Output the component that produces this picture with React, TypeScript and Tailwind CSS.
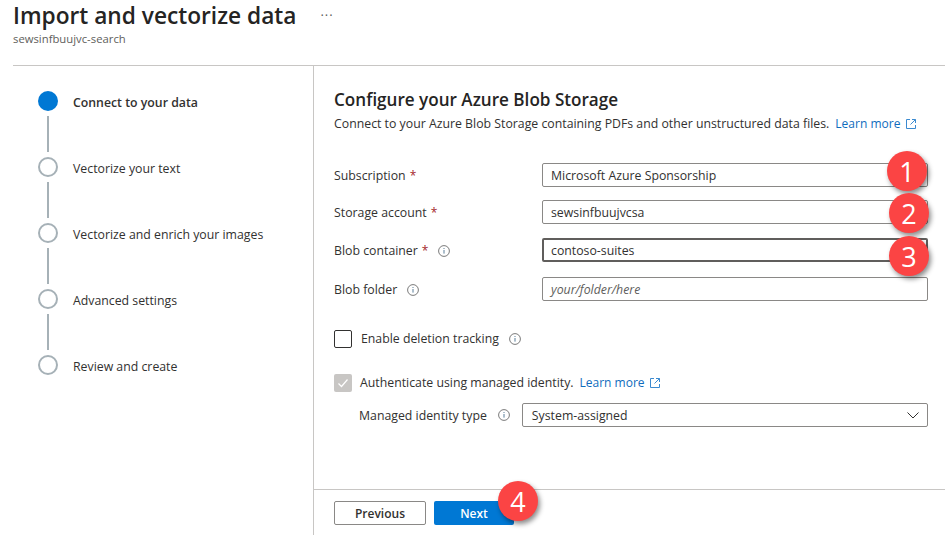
import React from "react";

const font = { fontFamily: '"Open Sans","Noto Sans",sans-serif' };

function Info({ className = "" }: { className?: string }) {
  return (
    <svg width="12" height="12" viewBox="0 0 12 12" fill="none" className={className}>
      <circle cx="6" cy="6" r="5.4" stroke="#6b6b6b" strokeWidth="0.9" />
      <rect x="5.5" y="5" width="1" height="3.6" fill="#5a7f99" />
      <rect x="5.5" y="3" width="1" height="1" fill="#5a7f99" />
    </svg>
  );
}

function Ext() {
  return (
    <svg width="10" height="10" viewBox="0 0 10 10" fill="none" stroke="#3b8ad0" strokeWidth="1">
      <path d="M4 .5H.5v9h9V6" />
      <path d="M6 .5h3.5V4M9.5.5 4.5 5.5" />
    </svg>
  );
}

function Badge({ n, className }: { n: number; className: string }) {
  return (
    <div
      className={`absolute w-10 h-10 rounded-full bg-[#fb4444] text-white flex items-center justify-center text-[27px] leading-none shadow-[2px_3px_5px_rgba(0,0,0,0.45)] ${className}`}
    >
      {n}
    </div>
  );
}

function Step({ label, active, last }: { label: string; active?: boolean; last?: boolean }) {
  return (
    <div className="flex">
      <div className="flex flex-col items-center w-5">
        {active ? (
          <div className="w-5 h-5 rounded-full bg-[#0078d4]" />
        ) : (
          <div className="w-5 h-5 rounded-full border-2 border-[#a6b1b7]" />
        )}
        {!last && <div className="w-0.5 h-9 my-[5px] bg-[#a6b1b7]" />}
      </div>
      <div className={`ml-[15px] pt-[2px] text-[12.3px] leading-5 text-[#323130] ${active ? "font-semibold" : ""}`}>
        {label}
      </div>
    </div>
  );
}

function Field({
  label,
  star,
  info,
  value,
  className = "",
  boxClass = "border border-[#8a8886] px-2",
  placeholder,
}: {
  label: string;
  star?: boolean;
  info?: boolean;
  value: string;
  className?: string;
  boxClass?: string;
  placeholder?: boolean;
}) {
  return (
    <div className={`flex items-center h-6 ${className}`}>
      <div className="w-[208px] pt-[2px] flex items-center text-[12.3px] text-[#323130]">
        <span>{label}</span>
        {star && <span className="ml-1 text-[12px] text-[#a4262c]">*</span>}
        {info && <Info className="ml-[10px]" />}
      </div>
      <div
        className={`w-[386px] h-6 pt-[2px] rounded-[2px] flex items-center text-[12.3px] ${boxClass} ${
          placeholder ? "italic text-[#605e5c]" : "text-[#323130]"
        }`}
      >
        {value}
      </div>
    </div>
  );
}

export default function App() {
  return (
    <div className="relative w-[945px] h-[540px] bg-white overflow-hidden" style={font}>
      <header className="pl-[13px] h-[65px]">
        <div className="flex items-start pt-[1px]">
          <h1 className="text-[22.7px] leading-[30px] font-semibold text-[#252423]">Import and vectorize data</h1>
          <span className="ml-[24px] mt-[6px] text-[13px] leading-4 tracking-[1px] text-[#605e5c]">···</span>
        </div>
        <div className="text-[11.3px] leading-4 text-[#605e5c]">sewsinfbuujvc-search</div>
      </header>

      <div className="ml-[13px] border-t border-[#c8c6c4] flex h-[470px]">
        <aside className="w-[301px] border-r border-[#c8c6c4] pl-[25px] pt-[25px] flex flex-col shrink-0">
          <Step label="Connect to your data" active />
          <Step label="Vectorize your text" />
          <Step label="Vectorize and enrich your images" />
          <Step label="Advanced settings" />
          <Step label="Review and create" last />
        </aside>

        <main className="flex-1 flex flex-col">
          <div className="flex-1 pl-[20px] pt-[22px]">
            <h2 className="text-[17.1px] leading-6 font-semibold text-[#252423]">Configure your Azure Blob Storage</h2>
            <p className="text-[12.3px] leading-4 text-[#323130] mt-[4px] flex items-center">
              Connect to your Azure Blob Storage containing PDFs and other unstructured data files.
              <span className="ml-[6px] text-[12px] text-[#0f6cbd]">Learn more</span>
              <span className="ml-[6px]"><Ext /></span>
            </p>
            <Field label="Subscription" star value="Microsoft Azure Sponsorship" className="mt-[31px]" />
            <Field label="Storage account" star value="sewsinfbuujvcsa" className="mt-[13px]" />
            <Field
              label="Blob container"
              star
              info
              value="contoso-suites"
              className="mt-[14px]"
              boxClass="border-2 border-[#605e5c] px-[7px]"
            />
            <Field label="Blob folder" info value="your/folder/here" placeholder className="mt-[15px]" />

            <div className="flex items-center mt-[29px] h-[18px]">
              <div className="w-[18px] h-[18px] rounded-[2px] border border-[#323130]" />
              <span className="ml-[9px] text-[12.3px] text-[#323130]">Enable deletion tracking</span>
              <Info className="ml-[10px]" />
            </div>

            <div className="flex items-center mt-[26px] h-[18px]">
              <div className="w-[18px] h-[18px] rounded-[2px] bg-[#c8c6c4] flex items-center justify-center">
                <svg width="12" height="12" viewBox="0 0 12 12" fill="none" stroke="#fff" strokeWidth="1.2">
                  <path d="M1.5 6.5 4.5 9.5 10.5 2.5" />
                </svg>
              </div>
              <span className="ml-2 text-[12.3px] text-[#323130]">Authenticate using managed identity.</span>
              <span className="ml-[6px] text-[12px] text-[#0f6cbd]">Learn more</span>
              <span className="ml-[5px]"><Ext /></span>
            </div>

            <div className="flex items-center mt-[11px] ml-[25px] h-6">
              <span className="pt-[2px] text-[12.3px] text-[#323130]">Managed identity type</span>
              <Info className="ml-[11px]" />
              <div className="ml-[12px] w-[406px] h-6 rounded-[2px] border border-[#8a8886] flex items-center justify-between pl-[9px] pr-2 text-[12.3px] text-[#323130]">
                <span className="pt-[2px]">System-assigned</span>
                <svg width="12" height="8" viewBox="0 0 12 8" fill="none" stroke="#323130" strokeWidth="1">
                  <path d="M.5 1.5 6 7l5.5-5.5" />
                </svg>
              </div>
            </div>
          </div>

          <footer className="h-[46px] border-t border-[#c8c6c4] pl-[20px] pt-[11px] flex gap-2 items-start">
            <button className="w-[92px] h-6 pt-px rounded-[2px] border border-[#8a8886] text-[12px] font-semibold text-[#323130]">
              Previous
            </button>
            <button className="w-[80px] h-6 pt-px rounded-[2px] bg-[#0078d4] text-[12px] font-semibold text-white">
              Next
            </button>
          </footer>
        </main>
      </div>

      <Badge n={1} className="left-[887px] top-[151px]" />
      <Badge n={2} className="left-[889px] top-[193px]" />
      <Badge n={3} className="left-[889px] top-[236px]" />
      <Badge n={4} className="left-[498px] top-[481px]" />
    </div>
  );
}
